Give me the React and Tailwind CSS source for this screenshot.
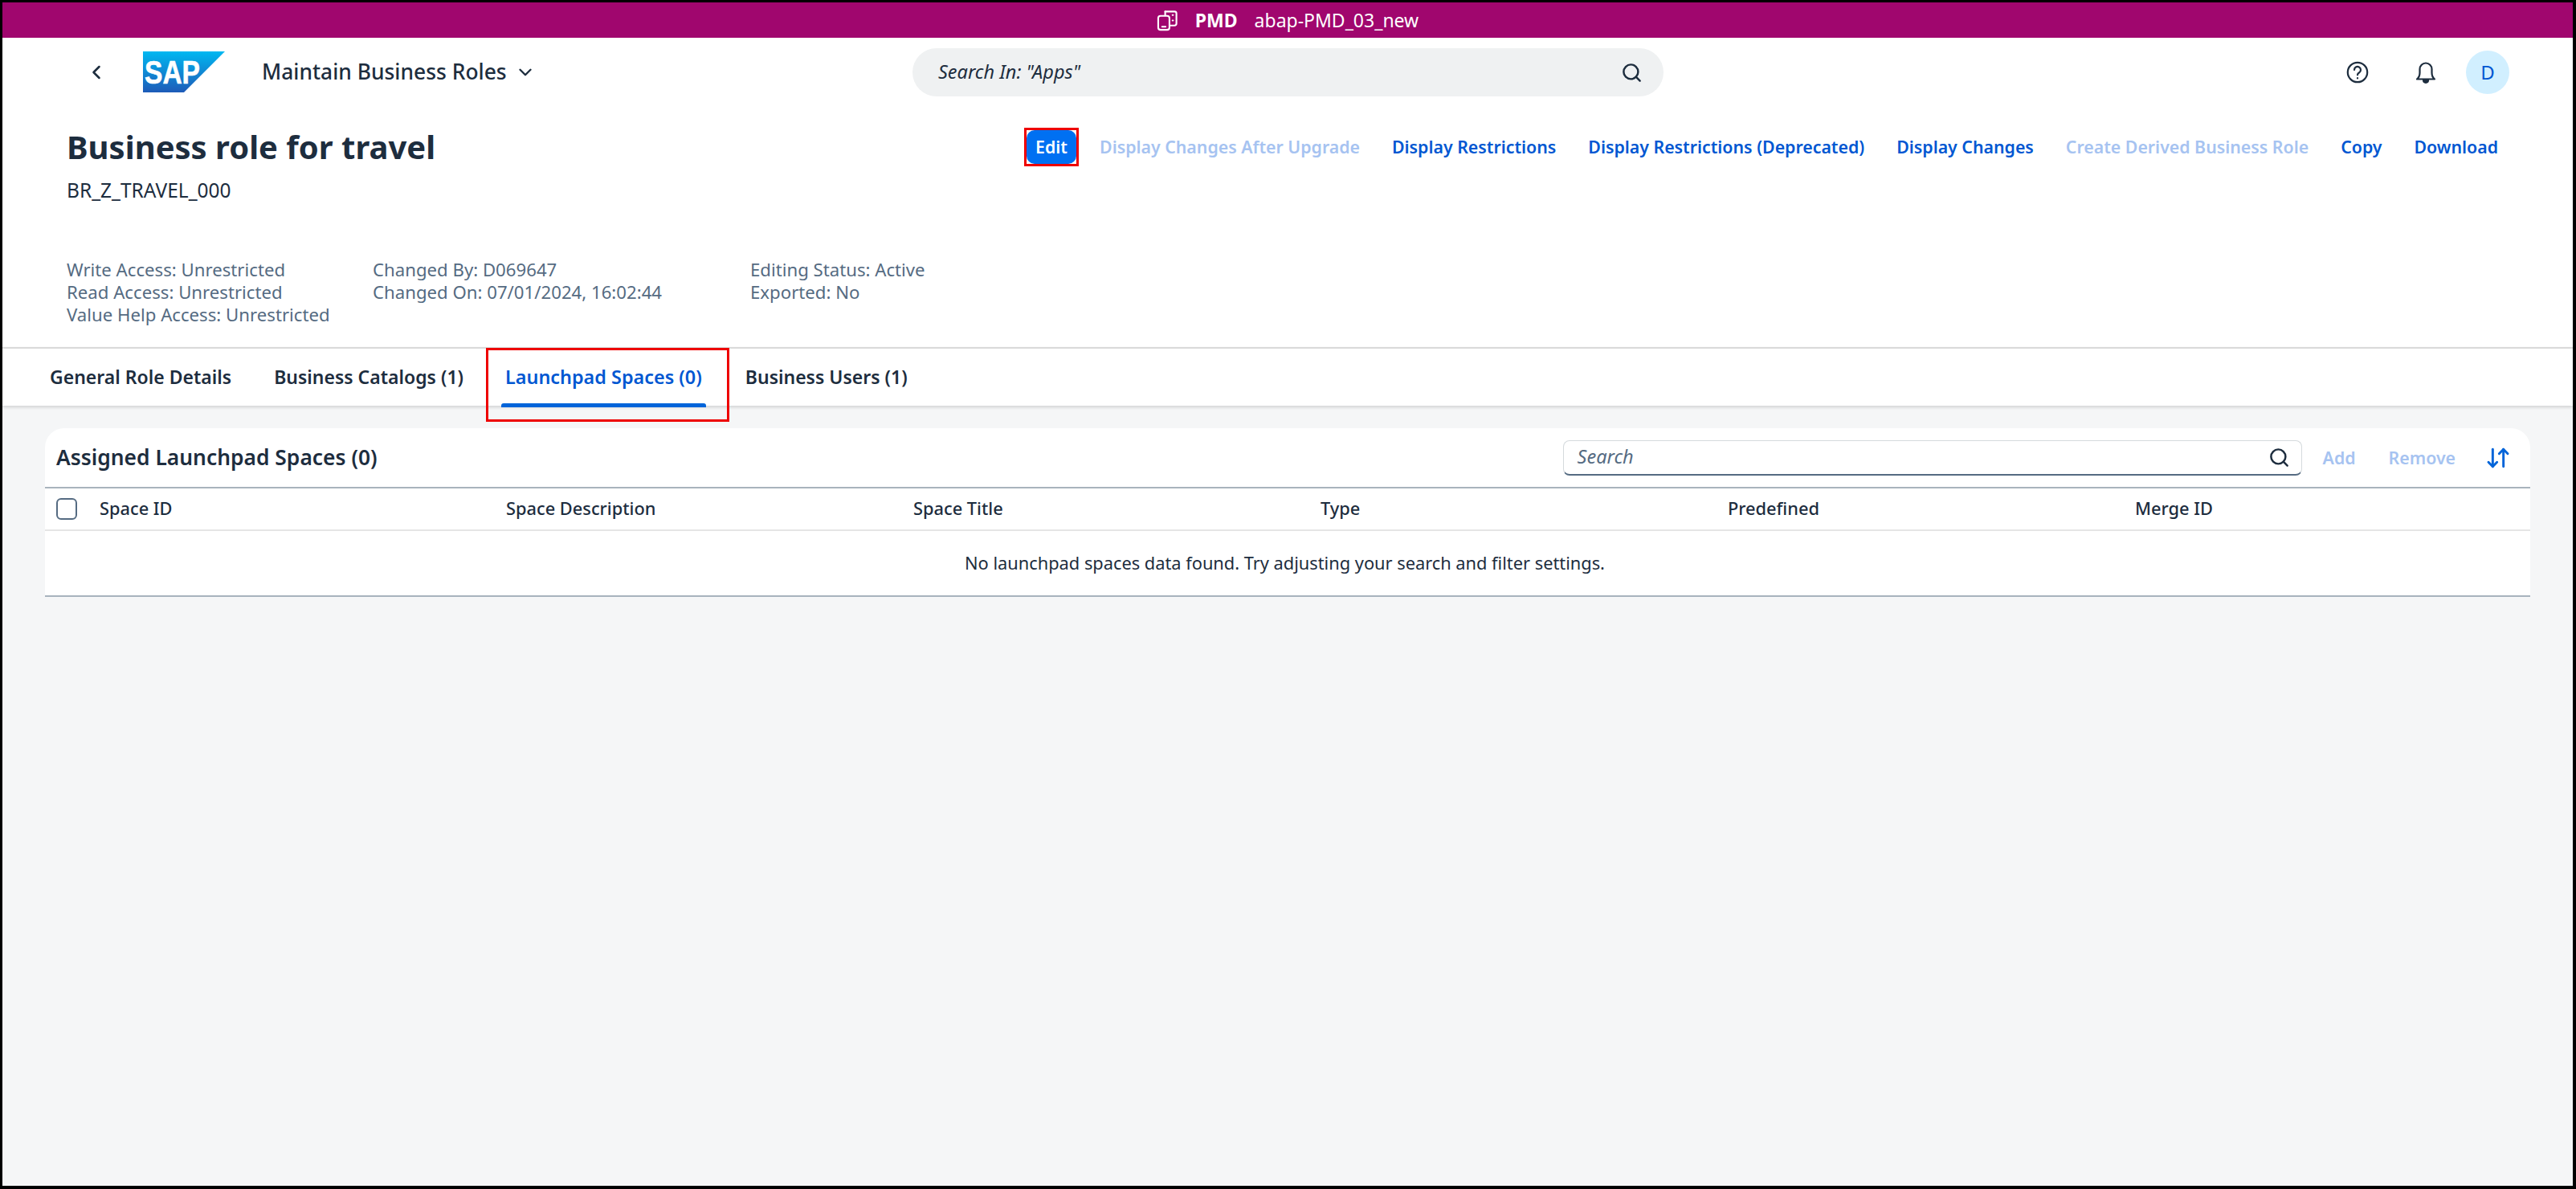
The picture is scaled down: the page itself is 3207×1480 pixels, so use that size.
import { ArrowDownUp, ChevronDown, ChevronLeft, Search } from "lucide-react";

const actions = [
  { label: "Display Changes After Upgrade", off: true },
  { label: "Display Restrictions" },
  { label: "Display Restrictions (Deprecated)" },
  { label: "Display Changes" },
  { label: "Create Derived Business Role", off: true },
  { label: "Copy" },
  { label: "Download" },
];

const columns = ["Space Description", "Space Title", "Type", "Predefined", "Merge ID"];

const SapLogo = () => (
  <svg width="102" height="51" viewBox="0 0 102 51" className="shrink-0">
    <defs>
      <linearGradient id="sapfill" x1="0" y1="0" x2="0" y2="1">
        <stop offset="0" stopColor="#00b8f1" />
        <stop offset="1" stopColor="#1e5bb8" />
      </linearGradient>
    </defs>
    <polygon points="0,0 102,0 51,51 0,51" fill="url(#sapfill)" />
    <text x="2" y="40" fontFamily="Liberation Sans" fontWeight="700" fontSize="40" textLength="69" lengthAdjust="spacingAndGlyphs" stroke="#fff" strokeWidth="0.6" fill="#fff">
      SAP
    </text>
  </svg>
);

const DevicesIcon = () => (
  <svg width="27" height="27" viewBox="0 0 28 28" fill="none" stroke="#fff" strokeWidth="2.2" strokeLinecap="round" strokeLinejoin="round">
    <path d="M11 2.5h12a2.5 2.5 0 0 1 2.5 2.5v13a2.5 2.5 0 0 1-2.5 2.5h-5" />
    <path d="M11 2.5v5" />
    <rect x="2" y="8" width="14.5" height="18" rx="3" />
    <path d="M7 22h4.500" />
    <path d="M20.500 7h.6M20.500 14h.6" />
  </svg>
);

const HelpIcon = () => (
  <svg width="28" height="28" viewBox="0 0 28 28" fill="none" stroke="#1d2d3e" strokeWidth="2.2" strokeLinecap="round">
    <circle cx="14" cy="14" r="12.200" />
    <path d="M10 11a4 4 0 1 1 6.200 3.300c-1.300.8-2.200 1.500-2.200 3" />
    <path d="M14 21.200v.3" />
  </svg>
);

const BellIcon = () => (
  <svg width="26" height="28" viewBox="0 0 26 28" fill="none" stroke="#1d2d3e" strokeWidth="2.2" strokeLinejoin="round">
    <path d="M2 22.500h22c-2.500-2-3.500-4-3.500-8V10a7.500 7.500 0 0 0-15 0v4.500c0 4-1 6-3.500 8z" />
    <path d="M10 23.500h6c0 2-1.200 3.300-3 3.300s-3-1.300-3-3.300z" fill="#1d2d3e" />
  </svg>
);

export default function App() {
  return (
    <div className="relative flex h-[1480px] w-[3207px] flex-col border-[3px] border-b-4 border-r-4 border-black bg-[#f5f6f7] font-['Noto_Sans',sans-serif] text-[#1d2d3e]">
      {/* system banner */}
      <div className="flex h-[44px] shrink-0 items-center justify-center gap-[21px] bg-[#a0066e] text-[23px] text-white">
        <DevicesIcon />
        <span className="font-bold">PMD</span>
        <span>abap-PMD_03_new</span>
      </div>

      {/* shell bar */}
      <div className="relative flex h-[85px] shrink-0 items-center bg-white">
        <ChevronLeft size={28} strokeWidth={2.2} className="ml-[103px]" />
        <div className="ml-[44px]"><SapLogo /></div>
        <span className="ml-[46px] text-[26.4px] font-medium">Maintain Business Roles</span>
        <ChevronDown size={26} strokeWidth={2.2} className="ml-[10px]" />
        <div className="absolute left-[1133px] top-[13px] flex h-[60px] w-[935px] items-center justify-between rounded-[30px] bg-[#eff1f2] pl-[32px] pr-[26px] text-[23.5px] italic">
          <span>Search In: "Apps"</span>
          <Search size={27} strokeWidth={2.2} />
        </div>
        <div className="ml-auto mr-[79px] flex items-center">
          <HelpIcon />
          <div className="ml-[58px]"><BellIcon /></div>
          <div className="ml-[37px] flex h-[54px] w-[54px] items-center justify-center rounded-full bg-[#d1efff] text-[24px] text-[#0057d2]">D</div>
        </div>
      </div>

      {/* object header */}
      <div className="h-[300px] shrink-0 bg-white pl-[80px] pt-[20px]">
        <div className="flex items-center justify-between pr-[93px]">
          <h1 className="text-[40px] font-bold leading-[62px]">Business role for travel</h1>
          <div className="flex items-center gap-[26px] text-[21.3px] font-semibold text-[#0057d2]">
            <div className="border-[3px] border-[#ee0000]">
              <button className="h-[42px] w-[62px] rounded-[10px] bg-[#0070f2] text-white">Edit</button>
            </div>
            <div className="flex items-center gap-[40px]">
              {actions.map((a) => (
                <span key={a.label} className={a.off ? "text-[#a6c3f1]" : ""}>{a.label}</span>
              ))}
            </div>
          </div>
        </div>
        <div className="mt-[3px] text-[24.5px] leading-[40px]">BR_Z_TRAVEL_000</div>
        <div className="mt-[65px] flex text-[22.2px] leading-[28px] text-[#556b82]">
          <div className="w-[381px]">
            <div>Write Access: Unrestricted</div>
            <div>Read Access: Unrestricted</div>
            <div>Value Help Access: Unrestricted</div>
          </div>
          <div className="w-[470px]">
            <div>Changed By: D069647</div>
            <div>Changed On: 07/01/2024, 16:02:44</div>
          </div>
          <div>
            <div>Editing Status: Active</div>
            <div>Exported: No</div>
          </div>
        </div>
      </div>

      {/* tabs */}
      <div className="flex h-[73px] shrink-0 items-stretch border-t-2 border-[#d9d9d9] bg-white pl-[59px] text-[23px] font-semibold shadow-[0_2px_4px_rgba(0,0,0,0.15)]">
        <div className="flex items-center">General Role Details</div>
        <div className="ml-[53px] flex items-center">Business Catalogs (1)</div>
        <div className="relative ml-[52px] flex items-center text-[23.4px] text-[#0057d2]">
          Launchpad Spaces (0)
          <div className="absolute -left-[5px] -right-[5px] bottom-[-2px] h-[5px] rounded-t-[3px] bg-[#0064d9]" />
        </div>
        <div className="ml-[54px] flex items-center">Business Users (1)</div>
      </div>

      {/* spaces table */}
      <div className="mx-[53px] mt-[28px] rounded-t-[24px] bg-white">
        <div className="flex h-[73px] items-center pl-[14px]">
          <h2 className="text-[26.4px] font-semibold">Assigned Launchpad Spaces (0)</h2>
          <div className="ml-auto flex h-[44px] w-[920px] items-center justify-between rounded-[8px] border border-b-2 border-[#d5dadd] border-b-[#556b82] pl-[17px] pr-[14px] text-[23.5px] italic text-[#556b82]">
            <span>Search</span>
            <Search size={27} strokeWidth={2.2} className="text-[#1d2d3e]" />
          </div>
          <span className="ml-[26px] text-[21.3px] font-semibold text-[#a6c3f1]">Add</span>
          <span className="ml-[41px] text-[21.3px] font-semibold text-[#a6c3f1]">Remove</span>
          <ArrowDownUp size={32} strokeWidth={2.2} className="ml-[37px] mr-[24px] text-[#0064d9]" />
        </div>
        <div className="flex h-[55px] items-center border-y-2 border-b-[#e5e5e5] border-t-[#a8b3bd] text-[21.8px] font-medium">
          <div className="ml-[14px] h-[27px] w-[26px] shrink-0 rounded-[6px] border-2 border-[#556b82]" />
          <div className="ml-[28px] w-[506px] shrink-0">Space ID</div>
          {columns.map((c) => (
            <div key={c} className="w-[507px] shrink-0">{c}</div>
          ))}
        </div>
        <div className="flex h-[82px] items-center justify-center border-b-2 border-[#a8b3bd] pr-[7px] text-[21.8px]">
          No launchpad spaces data found. Try adjusting your search and filter settings.
        </div>
      </div>

      {/* callout around the active tab */}
      <div className="absolute left-[602px] top-[430px] h-[92px] w-[303px] border-[3px] border-[#ee0000]" />
    </div>
  );
}
